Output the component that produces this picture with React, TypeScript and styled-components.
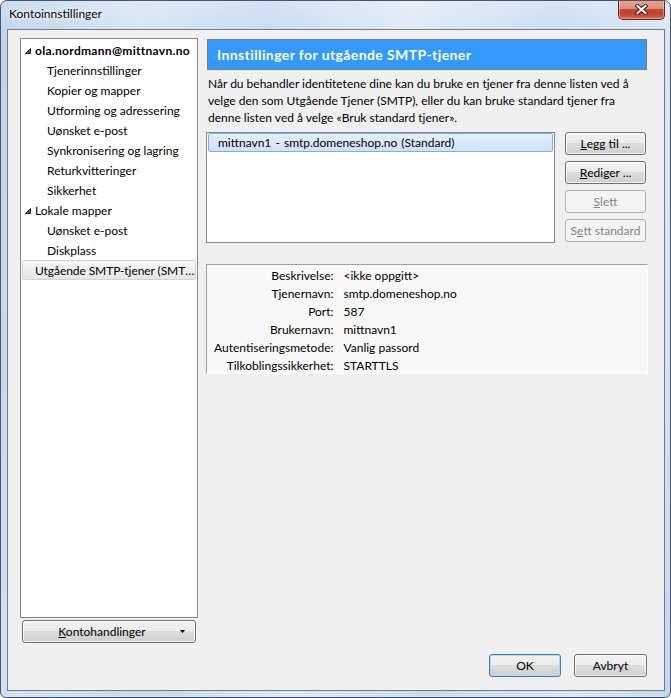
import React from 'react';
import styled, { createGlobalStyle, css } from 'styled-components';

const GlobalStyle = createGlobalStyle`
  html, body { margin: 0; padding: 0; background: #ffffff; }
  body {
    font-family: Lato, "Noto Sans", "Liberation Sans", sans-serif;
    font-size: 12px;
    color: #000;
  }
  * { box-sizing: border-box; }
`;

const Window = styled.div`
  width: 671px;
  height: 698px;
  border: 1px solid #4a5566;
  border-radius: 7px 7px 6px 6px;
  background:
    linear-gradient(180deg, rgba(255, 255, 255, 0.25) 0%, rgba(255, 255, 255, 0) 40px),
    linear-gradient(100deg, #bcd3ec 0%, #d3e3f4 18%, #c6daf0 34%, #dde9f7 52%, #c9dcf1 70%, #d9e7f6 88%, #c3d8ee 100%);
  padding: 0 5px 6px 6px;
  display: flex;
  flex-direction: column;
  overflow: hidden;
`;

const TitleBar = styled.div`
  height: 28px;
  display: flex;
  align-items: flex-start;
  padding-left: 2px;
`;

const Title = styled.span`
  margin-top: 5px;
  line-height: 16px;
  color: #000;
  text-shadow: 0 0 6px #ffffff, 0 0 3px #ffffff;
`;

const CloseButton = styled.div`
  margin-left: auto;
  margin-top: -1px;
  width: 47px;
  height: 20px;
  border: 1px solid #5f2a22;
  border-top: none;
  border-radius: 0 0 5px 5px;
  background: linear-gradient(180deg, #e7a597 0%, #dc8c7c 45%, #c74a35 50%, #c1412b 70%, #d86a4e 100%);
  box-shadow: inset 0 0 0 1px rgba(255, 255, 255, 0.35);
  display: flex;
  align-items: center;
  justify-content: center;
`;

const Client = styled.div`
  flex: 1;
  border: 1px solid #6d7b8c;
  background: #f0f0f0;
  padding: 8px 16px 13px 12px;
  display: flex;
  flex-direction: column;
  gap: 11px;
  min-height: 0;
`;

const Main = styled.div`
  flex: 1;
  display: grid;
  grid-template-columns: 178px 1fr;
  column-gap: 8px;
  min-height: 0;
`;

const Sidebar = styled.div`
  display: flex;
  flex-direction: column;
  gap: 2px;
  min-height: 0;
`;

const TreeBox = styled.div`
  flex: 1;
  background: #ffffff;
  border: 1px solid #828790;
  padding: 1px 1px 0 1px;
`;

const TreeRow = styled.div<{ $depth: number; $selected?: boolean; $bold?: boolean }>`
  height: 20px;
  display: flex;
  align-items: center;
  padding-left: ${(p) => p.$depth * 12}px;
  padding-right: 2px;
  border: 1px solid transparent;
  border-radius: 2px;
  font-weight: ${(p) => (p.$bold ? 700 : 400)};
  letter-spacing: ${(p) => (p.$bold ? '0.3px' : '0')};
  ${(p) =>
    p.$selected &&
    css`
      padding-right: 0;
      letter-spacing: -0.08px;
      border-color: #d2d2d2;
      background: linear-gradient(180deg, #f7f7f7 0%, #e6e6e6 100%);
    `}
`;

const Twisty = styled.span`
  width: 12px;
  flex: none;
  display: flex;
  align-items: center;
  padding-left: 2px;
  padding-top: 2px;
`;

const TreeLabel = styled.span`
  flex: 1;
  min-width: 0;
  overflow: hidden;
  white-space: nowrap;
  text-overflow: ellipsis;
`;

const PushButton = styled.button<{ $width?: number; $default?: boolean }>`
  height: 23px;
  width: ${(p) => (p.$width ? `${p.$width}px` : 'auto')};
  font: inherit;
  color: #000;
  padding: 0;
  border: 1px solid #707070;
  border-radius: 3px;
  background: linear-gradient(180deg, #f2f2f2 0%, #ebebeb 49%, #dddddd 50%, #cfcfcf 100%);
  box-shadow: inset 0 0 0 1px rgba(255, 255, 255, 0.75);
  display: flex;
  align-items: center;
  justify-content: center;
  &:disabled {
    border-color: #adb2b5;
    background: #f4f4f4;
    color: #838383;
    box-shadow: none;
  }
  ${(p) =>
    p.$default &&
    css`
      border-color: #3c7fb1;
      box-shadow: inset 0 0 0 1px #a9dbf6;
    `}
`;

const MenuButton = styled(PushButton)`
  margin: 0 2px;
  justify-content: flex-start;
`;

const MenuText = styled.span`
  flex: 1;
  text-align: center;
  padding-left: 12px;
`;

const MenuArrow = styled.span`
  width: 26px;
  display: flex;
  justify-content: center;
  align-items: center;
`;

const Key = styled.span`
  text-decoration: underline;
  text-underline-offset: 1px;
`;

const Pane = styled.div`
  display: flex;
  flex-direction: column;
  min-width: 0;
`;

const Banner = styled.div`
  margin: 1px 1px 0 1px;
  height: 31px;
  background: #3399fd;
  border: 1px solid #7c7c7c;
  color: #ffffff;
  font-weight: 700;
  font-size: 14px;
  letter-spacing: 0.4px;
  padding-left: 9px;
  display: flex;
  align-items: center;
`;

const Description = styled.p`
  margin: 5px 0 0 0;
  padding-left: 2px;
  line-height: 17px;
`;

const ServerArea = styled.div`
  margin-top: 6px;
  display: flex;
  align-items: flex-start;
`;

const ListBox = styled.div`
  width: 349px;
  height: 111px;
  background: #ffffff;
  border: 1px solid #828790;
  padding: 0 1px;
`;

const ListItem = styled.div<{ $selected?: boolean }>`
  height: 19px;
  display: flex;
  align-items: center;
  padding-left: 9px;
  border: 1px solid transparent;
  border-radius: 2px;
  word-spacing: 1px;
  ${(p) =>
    p.$selected &&
    css`
      border-color: #84acdd;
      background: linear-gradient(180deg, #e4effd 0%, #cfe2fb 100%);
    `}
`;

const ButtonColumn = styled.div`
  margin-left: 10px;
  display: flex;
  flex-direction: column;
  gap: 6px;
`;

const Details = styled.div`
  margin-top: 21px;
  height: 110px;
  background: #f8f8f8;
  border-top: 1px solid #a0a0a0;
  border-left: 1px solid #a0a0a0;
  border-right: 1px solid #ffffff;
  border-bottom: 1px solid #ffffff;
  padding: 1px 0 0 7px;
  display: grid;
  grid-template-columns: auto 1fr;
  grid-auto-rows: 18px;
  column-gap: 10px;
  align-items: center;
`;

const DetailLabel = styled.span`
  text-align: right;
  white-space: nowrap;
`;

const DetailValue = styled.span`
  white-space: nowrap;
`;

const Footer = styled.div`
  display: flex;
  justify-content: flex-end;
  gap: 13px;
  padding-right: 1px;
`;

const ExpandedIcon = () => (
  <svg width="6" height="6" viewBox="0 0 6 6">
    <path d="M5.5 0.5 L5.5 5.5 L0.5 5.5 Z" fill="#595959" stroke="#262626" strokeWidth="1" strokeLinejoin="miter" />
  </svg>
);

const DropArrow = () => (
  <svg width="5" height="3" viewBox="0 0 5 3">
    <path d="M0 0 L5 0 L2.5 3 Z" fill="#000" />
  </svg>
);

const CloseGlyph = () => (
  <svg width="13" height="11" viewBox="0 0 13 11">
    <g strokeLinecap="square">
      <path d="M2.5 2 L10.5 9 M10.5 2 L2.5 9" stroke="#3a1710" strokeWidth="4.2" />
      <path d="M2.5 2 L10.5 9 M10.5 2 L2.5 9" stroke="#ffffff" strokeWidth="2.2" />
    </g>
  </svg>
);

type TreeItem = { label: string; depth: number; expander?: boolean; bold?: boolean; selected?: boolean };

const treeItems: TreeItem[] = [
  { label: 'ola.nordmann@mittnavn.no', depth: 0, expander: true, bold: true },
  { label: 'Tjenerinnstillinger', depth: 1 },
  { label: 'Kopier og mapper', depth: 1 },
  { label: 'Utforming og adressering', depth: 1 },
  { label: 'Uønsket e-post', depth: 1 },
  { label: 'Synkronisering og lagring', depth: 1 },
  { label: 'Returkvitteringer', depth: 1 },
  { label: 'Sikkerhet', depth: 1 },
  { label: 'Lokale mapper', depth: 0, expander: true },
  { label: 'Uønsket e-post', depth: 1 },
  { label: 'Diskplass', depth: 1 },
  { label: 'Utgående SMTP-tjener (SMTP)', depth: 0, selected: true },
];

const details: [string, string][] = [
  ['Beskrivelse:', '<ikke oppgitt>'],
  ['Tjenernavn:', 'smtp.domeneshop.no'],
  ['Port:', '587'],
  ['Brukernavn:', 'mittnavn1'],
  ['Autentiseringsmetode:', 'Vanlig passord'],
  ['Tilkoblingssikkerhet:', 'STARTTLS'],
];

export default function App() {
  return (
    <>
      <GlobalStyle />
      <Window>
        <TitleBar>
          <Title>Kontoinnstillinger</Title>
          <CloseButton>
            <CloseGlyph />
          </CloseButton>
        </TitleBar>
        <Client>
          <Main>
            <Sidebar>
              <TreeBox>
                {treeItems.map((item, i) => (
                  <TreeRow key={i} $depth={item.depth} $bold={item.bold} $selected={item.selected}>
                    <Twisty>{item.expander && <ExpandedIcon />}</Twisty>
                    <TreeLabel>{item.label}</TreeLabel>
                  </TreeRow>
                ))}
              </TreeBox>
              <MenuButton type="button">
                <MenuText>
                  <Key>K</Key>ontohandlinger
                </MenuText>
                <MenuArrow>
                  <DropArrow />
                </MenuArrow>
              </MenuButton>
            </Sidebar>
            <Pane>
              <Banner>Innstillinger for utgående SMTP-tjener</Banner>
              <Description>
                Når du behandler identitetene dine kan du bruke en tjener fra denne listen ved å velge den som
                Utgående Tjener (SMTP), eller du kan bruke standard tjener fra denne listen ved å velge «Bruk
                standard tjener».
              </Description>
              <ServerArea>
                <ListBox>
                  <ListItem $selected>mittnavn1 - smtp.domeneshop.no (Standard)</ListItem>
                </ListBox>
                <ButtonColumn>
                  <PushButton type="button" $width={81}>
                    <Key>L</Key>egg til ...
                  </PushButton>
                  <PushButton type="button" $width={81}>
                    <Key>R</Key>ediger ...
                  </PushButton>
                  <PushButton type="button" $width={81} disabled>
                    <Key>S</Key>lett
                  </PushButton>
                  <PushButton type="button" $width={81} disabled>
                    S<Key>e</Key>tt standard
                  </PushButton>
                </ButtonColumn>
              </ServerArea>
              <Details>
                {details.map(([label, value]) => (
                  <React.Fragment key={label}>
                    <DetailLabel>{label}</DetailLabel>
                    <DetailValue>{value}</DetailValue>
                  </React.Fragment>
                ))}
              </Details>
            </Pane>
          </Main>
          <Footer>
            <PushButton type="button" $width={72} $default>
              OK
            </PushButton>
            <PushButton type="button" $width={73}>
              Avbryt
            </PushButton>
          </Footer>
        </Client>
      </Window>
    </>
  );
}
